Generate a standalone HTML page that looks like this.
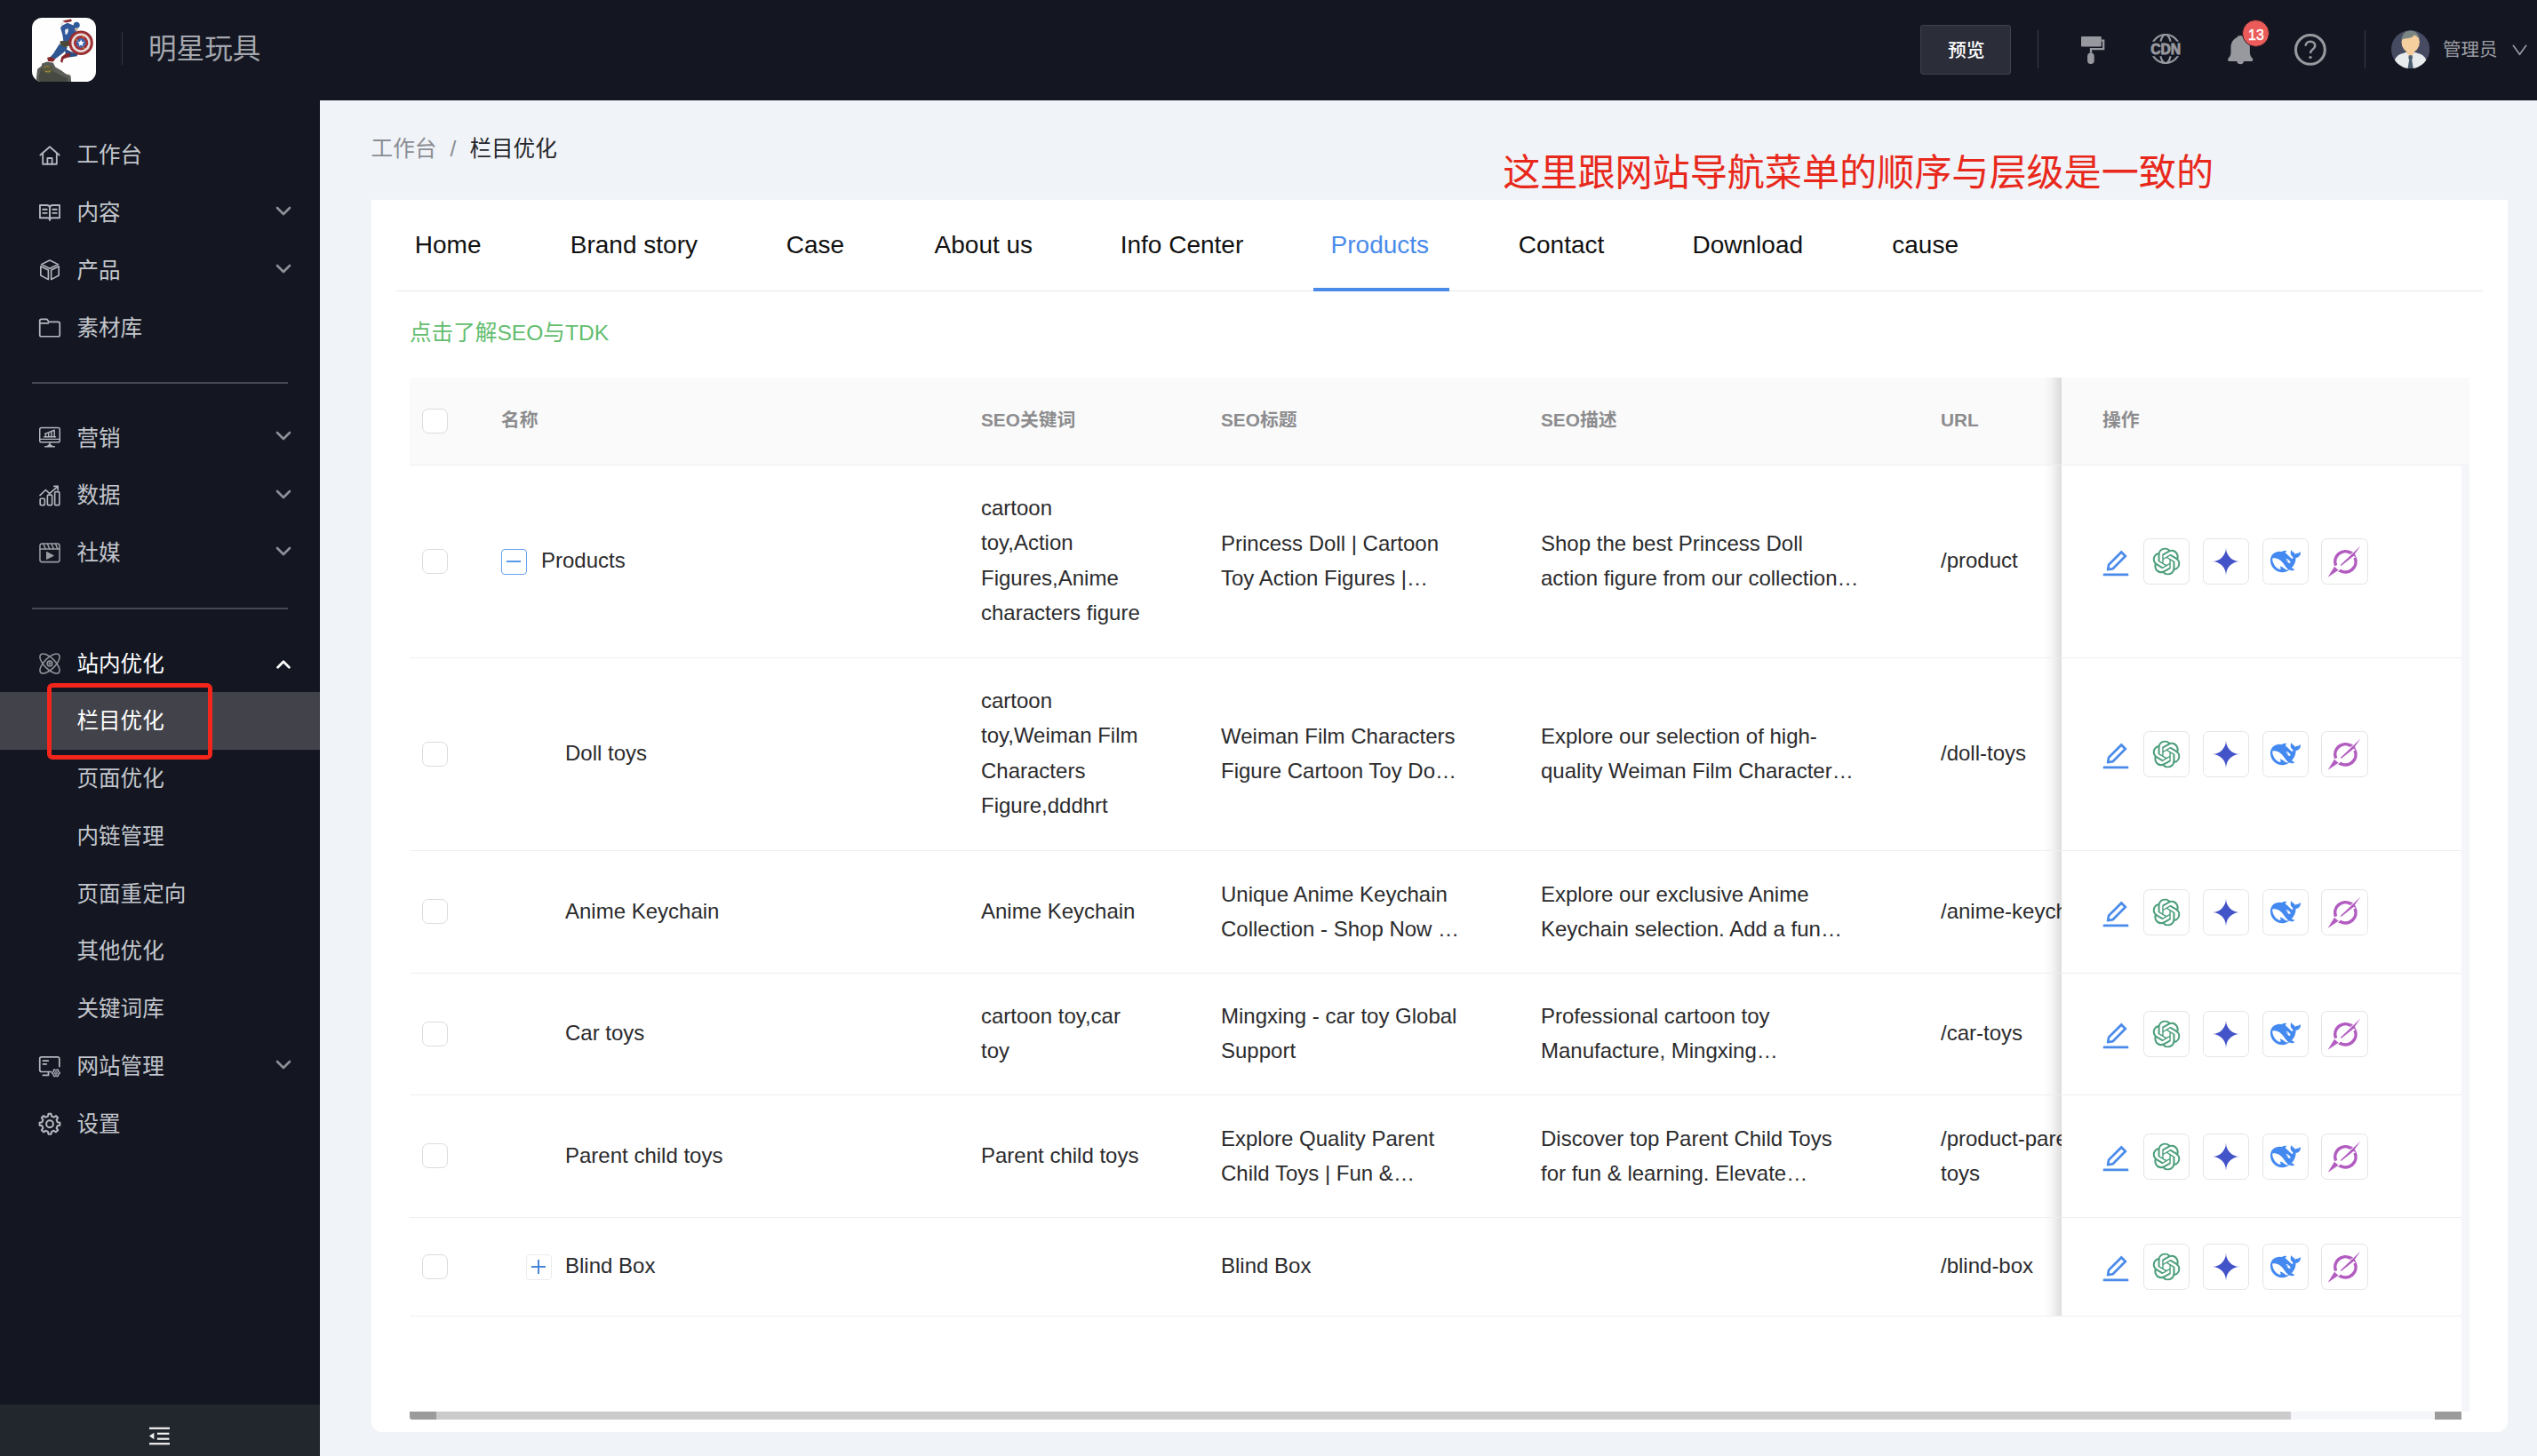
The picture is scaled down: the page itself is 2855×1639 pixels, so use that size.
<!DOCTYPE html>
<html lang="zh-CN"><head><meta charset="utf-8"><title>栏目优化</title>
<style>
html,body{margin:0;padding:0}
body{width:2855px;height:1639px;overflow:hidden;background:#f0f3f7;position:relative;font-family:"Liberation Sans","Noto Sans CJK SC",sans-serif;color:#2b2d30}
*{box-sizing:border-box}
.abs{position:absolute}
#hdr{position:absolute;left:0;top:0;width:2855px;height:113px;background:#141722}
#side{position:absolute;left:0;top:113px;width:360px;height:1526px;background:#141722}
#logo{position:absolute;left:36px;top:20px;width:72px;height:72px}
.vdiv{position:absolute;width:1px;background:#33363f}
#title{position:absolute;left:167px;top:30px;height:50px;line-height:50px;font-size:31.600px;color:#a4a7ae;letter-spacing:0}
#preview{position:absolute;left:2161px;top:28px;width:102px;height:56px;border:1px solid #3f424c;background:#2b2d38;border-radius:3px;color:#fff;font-weight:500;font-size:20.800px;line-height:55.800px;text-align:center;padding-left:1.500px}
.hi{position:absolute}
#badge{position:absolute;left:2523.400px;top:22.200px;width:31px;height:31px;border-radius:50%;background:#ea5b59;border:1px solid #2a1a22;color:#fff;font-weight:normal;-webkit-text-stroke:.450px #fff;font-size:15.800px;line-height:34.400px;text-align:center;letter-spacing:0;overflow:hidden}
#uname{position:absolute;left:2749px;top:36px;height:40px;line-height:40px;font-size:20.500px;color:#9b9da4}
/* sidebar */
.actbg{position:absolute;left:0;top:778.600px;width:360px;height:65.200px;background:#42434a}
.ico{position:absolute;left:42.500px;width:26px;height:26px}
.ico svg{display:block}
.mt{position:absolute;left:86.500px;height:66.200px;line-height:66.200px;font-size:24.550px;color:#c3c6cc;white-space:nowrap}
.chev{position:absolute;left:309.500px;width:18px;height:12px}
.chev svg{display:block}
.sdiv{position:absolute;left:36px;width:288px;height:2px;background:#464953}
#redbox{position:absolute;left:53.200px;top:768.600px;width:186px;height:86.500px;border:5.800px solid #f4261b;border-radius:6px}
#fold{position:absolute;left:0;top:1580.700px;width:360px;height:59px;background:#22272d}
/* main */
#bc{position:absolute;left:417.600px;top:148px;height:40px;line-height:40px;font-size:24.600px;white-space:nowrap;color:#8a8d93}
#bc b{font-weight:normal;color:#26282c}
#bc i{font-style:normal;display:inline-block;width:37px;text-align:center}
#note{position:absolute;left:1691.200px;top:162.300px;height:66px;line-height:66px;font-size:42.100px;color:#e8281b;white-space:nowrap}
#card{position:absolute;left:418px;top:225px;width:2404px;height:1387px;background:#fff;border-radius:0 0 12px 12px}
#tabline{position:absolute;left:28px;top:102px;width:2348px;height:1px;background:#e4e7ed}
.tab{position:absolute;top:29.400px;height:44px;line-height:44px;font-size:28px;color:#111;white-space:nowrap}
.tab.on{color:#4a8bea}
#tabbar{position:absolute;left:1060px;top:99px;width:153px;height:4px;background:#4a8bea}
#tip{position:absolute;left:43px;top:130px;height:40px;line-height:40px;font-size:24.600px;color:#63bd6e;white-space:nowrap}
/* table */
#tbl{position:absolute;left:43px;top:200px;width:2318px;height:1164px}
#th{position:absolute;left:0;top:0;width:2318px;height:99px;background:#fafafa;border-bottom:1px solid #efefef;border-radius:3px 3px 0 0}
#th span.h{position:absolute;top:0;height:98px;line-height:96.500px;font-size:20.800px;font-weight:bold;color:#8c8c8e;white-space:nowrap}
.cb{position:absolute;left:14px;top:50%;width:29px;height:28px;margin-top:-14.200px;border:1.500px solid #dcdcdc;border-radius:7px;background:#fff}
.tr{position:absolute;left:0;width:2309px;border-bottom:1px solid #efefef;overflow:hidden}
.tr .c{position:absolute;top:50%;transform:translateY(calc(-50% - 1.1px));font-size:24px;line-height:39.375px;white-space:nowrap;color:#2b2b2d}
.exp{position:absolute;top:50%;width:29px;height:29px;margin-top:-14.500px;border-radius:4px;background:#fff}
.exp.minus{left:103px;border:1.500px solid #6aa3ec}
.exp.minus i{position:absolute;left:5px;top:12px;width:16px;height:2px;background:#5a9be9}
.exp.plus{left:130.500px;border:1px solid #ececec}
.exp.plus i{position:absolute;left:5.500px;top:12.800px;width:16px;height:1.600px;background:#4a86d8}
.exp.plus b{position:absolute;left:12.700px;top:5.500px;width:1.600px;height:16px;background:#4a86d8}
.fx{position:absolute;left:1859px;top:0;width:450px;height:100%;background:#fff}
.fx:before{content:"";position:absolute;left:-20px;top:0;width:20px;height:100%;background:linear-gradient(to right,rgba(0,0,0,0),rgba(0,0,0,.03) 40%,rgba(0,0,0,.13))}
.ops{position:absolute;left:45px;top:50%;height:52px;margin-top:-26px;width:320px}
.ops .edit{position:absolute;left:.200px;top:12.300px}
.ab{position:absolute;top:0;width:52px;height:52px;border:1px solid #e3e4e8;border-radius:6.500px;background:#fff}
.ab svg{position:absolute;left:50%;top:50%;transform:translate(-50%,-50%)}
.ab:nth-of-type(1){left:46.800px}
.ab:nth-of-type(2){left:113.500px}
.ab:nth-of-type(3){left:181.200px}
.ab:nth-of-type(4){left:247.300px;width:52.600px}
#gut{position:absolute;left:2309px;top:99px;width:9px;height:1065px;background:#f5f6fa}
#hs{position:absolute;left:0;top:1164px;width:2309px;height:9px;background:#f5f6fa}
#hs i{position:absolute;top:0;height:9px}
</style></head><body>

<div id="hdr">
  <svg id="logo" viewBox="0 0 72 72">
    <defs><clipPath id="lc"><rect width="72" height="72" rx="11.500"/></clipPath><filter id="lb" x="-5%" y="-5%" width="110%" height="110%"><feGaussianBlur stdDeviation=".45"/></filter></defs>
    <g clip-path="url(#lc)">
      <rect width="72" height="72" fill="#fefefe"/>
      <g filter="url(#lb)">
      <path d="M4.900 68.100 6.100 57.700 10.700 54.200 11.300 51.400 17 49.600 23.900 50.800 26.300 55.400 33.200 59.400 37.800 62.900 43.600 65.200 44.100 72H4.900z" fill="#5a5d58"/>
      <path d="M8 66l2-8 5-3 6 1 4 5 8 4 7 3v4H8z" fill="#444842"/>
      <path d="M12 57.500c1.500-3 5-4.500 8-3.500s4.500 4 3 6.500-5 3.500-8 2-4-3-3-5z" fill="#55583d"/>
      <path d="M13.500 56.500l3-2 3 .5M15 60l3 1 3-1.500M41 63.500l1.500.5" stroke="#b3923c" stroke-width="1" fill="none"/>
      <path d="M30.900 29.400 40.100 33.500 35.500 39.200 26.300 46.200 19.900 45 23.900 40.400z" fill="#2f5690"/>
      <path d="M17 45 20.500 43.900 26.300 46.200 23.900 49.600 18.200 49z" fill="#84282c"/>
      <path d="M36.600 34.600 43.600 38.100 51.600 41 50.500 43.300 41.800 44.400 37.800 40.400z" fill="#2b4d84"/>
      <path d="M37.800 40.400 43.600 39.800 42.400 43.900 35.500 46.200 34.300 50.800 32 49.600 33.200 43.900z" fill="#86282c"/>
      <path d="M31.400 26.500 41.800 24.800 42.400 31.200 36.600 33.500 32 30z" fill="#4b4a34"/>
      <path d="M33.800 8.700 40.100 5.800 48.200 9.200 51.100 13.800 46 20 42.800 25 35.500 26.800 34.300 19 32 11.500z" fill="#30599a"/>
      <path d="M37 13.500l3.500-1.500 .5 3-1.500 3.500-2 .5z" fill="#e8edf4"/>
      <path d="M30.900 7.500 34.300 4.600 36.600 5.800 33.200 9.200z" fill="#e9e6e3"/>
      <path d="M34.300 3.500 43.600 1.400 45 2.900 44.100 4.300 37.800 5.500z" fill="#8c2a2e"/>
      <circle cx="50.200" cy="8.300" r="3.500" fill="#2f5a9a"/>
      <path d="M48 11.500l4 .5-1 3-2.500-.5z" fill="#d9b79b"/>
      </g>
      <g filter="url(#lb)">
      <circle cx="55.100" cy="28.300" r="13.700" fill="#8d2b2d"/>
      <circle cx="55.100" cy="28.300" r="12.600" fill="#a63336"/>
      <circle cx="55.100" cy="28.300" r="10.700" fill="#e6e3e3"/>
      <circle cx="55.100" cy="28.300" r="8.200" fill="#a53034"/>
      <circle cx="55.100" cy="28.300" r="5.400" fill="#4368b0"/>
      <path d="M55.100 24.600l1.100 2.400 2.600.3-1.900 1.800.5 2.600-2.300-1.300-2.300 1.300.5-2.600-1.900-1.800 2.600-.3z" fill="#fff"/>
      <path d="M48.500 23.500l3 2.500M56.500 19.500l1.500 3M57.500 33.500l2.500 1.500" stroke="#d9a33a" stroke-width="1" fill="none"/>
      </g>
    </g>
  </svg>
  <div class="vdiv" style="left:137px;top:36px;height:37px"></div>
  <div id="title">明星玩具</div>
  <div id="preview">预览</div>
  <div class="vdiv" style="left:2293px;top:34px;height:43px;background:#3a3d47"></div>
  <!-- paint roller -->
  <svg class="hi" style="left:2341.900px;top:40.900px" width="28" height="32" viewBox="0 0 28 32" fill="#97999f">
    <rect x="0" y="0" width="22.800" height="11.400" rx="1"/>
    <path d="M22.800 4.600h2.400v9.600H11v4.600" fill="none" stroke="#97999f" stroke-width="2.300"/>
    <rect x="7.100" y="18.600" width="7.600" height="12.300" rx="3.700"/>
  </svg>
  <!-- cdn -->
  <svg class="hi" style="left:2418px;top:36px" width="38" height="38" viewBox="0 0 38 38" fill="none">
    <defs><clipPath id="cg"><path d="M0 0h38v10.800H0zM0 27.200h38V38H0z"/></clipPath></defs>
    <g clip-path="url(#cg)" stroke="#97999f" stroke-width="2.200">
      <circle cx="19" cy="19" r="16"/>
      <ellipse cx="19" cy="19" rx="6.600" ry="16"/>
    </g>
    <text x="19.200" y="25" text-anchor="middle" font-family="Liberation Sans, sans-serif" font-weight="bold" font-size="16.800" fill="#97999f" stroke="#97999f" stroke-width=".900" textLength="34" lengthAdjust="spacingAndGlyphs">CDN</text>
  </svg>
  <!-- bell -->
  <svg class="hi" style="left:2506.800px;top:39.900px;overflow:visible" width="28.400" height="32.300" viewBox="0 0 28.400 32.300" fill="#97999f"><path d="M14.200 0C12.400 0 10.900.800 10.200 2.200 6 4 3.600 8 3.500 13v6.200c0 3.300-1.700 5.200-3.100 6.700-.900 1.100-.200 3.100 1.400 3.100h8.400c.400 2 2 3.300 4 3.300s3.600-1.300 4-3.300h8.400c1.600 0 2.300-2 1.400-3.100-1.400-1.500-3.100-3.400-3.100-6.700V13c-.100-5-2.500-9-6.700-10.800C17.500.800 16 0 14.200 0z"/></svg>
  <div id="badge">13</div>
  <!-- help -->
  <svg class="hi" style="left:2581px;top:37px" width="38" height="38" viewBox="0 0 38 38" fill="none">
    <circle cx="18.900" cy="18.900" r="16.400" stroke="#97999f" stroke-width="3.100"/>
    <path d="M13.600 14.800c0-3 2.300-5 5.300-5s5.300 1.900 5.300 4.600c0 2.200-1.300 3.300-2.800 4.400-1.500 1.100-2.400 2-2.400 4.300" stroke="#97999f" stroke-width="2.600"/>
    <circle cx="19" cy="27.600" r="1.700" fill="#97999f"/>
  </svg>
  <div class="vdiv" style="left:2661px;top:34px;height:43px;background:#3a3d47"></div>
  <!-- avatar -->
  <svg class="hi" style="left:2690.800px;top:34.100px" width="43.200" height="43.200" viewBox="0 0 43.200 43.200">
    <defs><clipPath id="av"><circle cx="21.600" cy="21.600" r="21.600"/></clipPath></defs>
    <g clip-path="url(#av)">
      <rect width="43.200" height="43.200" fill="#474b61"/>
      <path d="M3.500 36c.5-5 4-8.500 9-9.800l5-1.600h8.300l5 1.600c5 1.300 8.500 4.800 9 9.800v8H3.500z" fill="#e8ecec"/>
      <path d="M17.300 20h8.700v6l-4.300 3.400-4.400-3.400z" fill="#f4cd9b"/>
      <path d="M19.800 28.300h3.800l.5 3.200-.9 1.500 1.700 10.500h-6.400l1.700-10.500-.9-1.500z" fill="#4d5f70"/>
      <ellipse cx="21.700" cy="13.600" rx="10.200" ry="11.400" fill="#f5cf9d"/>
      <path d="M11.400 11.500C12 4.500 16 .6 21.800.6c5.800 0 9.500 3.800 10.100 10.300-1.500-3-4-4.800-6.300-5.300-1 2-3.300 3.300-6.400 3.300-3.200 0-6 .6-7.800 2.600z" fill="#7a8584"/>
    </g>
  </svg>
  <div id="uname">管理员</div>
  <svg class="hi" style="left:2826.500px;top:49.500px" width="17" height="13" viewBox="0 0 17 13" fill="none" stroke="#9b9da4" stroke-width="1.600" stroke-linecap="round" stroke-linejoin="round"><path d="M1.300 1.300l7.200 10 7.200-10"/></svg>
</div>

<div id="side">
<div style="position:absolute;left:0;top:-113px;width:360px;height:1639px">
<div class="actbg"></div>
<span class="ico" style="top:161.50px"><svg width="26" height="26" viewBox="0 0 24 24" fill="none" stroke="#b4b7be" stroke-width="1.7" stroke-linecap="round" stroke-linejoin="round" ><path d="M2.2 11.6 12 3l9.8 8.600"/><path d="M4.800 9.800V21h14.400V9.800"/><path d="M9.600 21v-6.200h4.800V21"/></svg></span><span class="mt" style="top:141.70px">工作台</span>
<span class="ico" style="top:226.20px"><svg width="26" height="26" viewBox="0 0 24 24" fill="none" stroke="#b4b7be" stroke-width="1.7" stroke-linecap="round" stroke-linejoin="round" ><path d="M1.800 4.600h7.200c1.700 0 3 1.200 3 2.800V20c0-1.300-1.100-2.200-2.500-2.200H1.800z"/><path d="M22.200 4.600H15c-1.700 0-3 1.200-3 2.800V20c0-1.300 1.100-2.200 2.500-2.200h7.700z"/><path d="M4.800 9h4.200M4.800 12.800h4.200M15 9h4.200M15 12.800h4.200"/></svg></span><span class="mt" style="top:206.80px">内容</span><span class="chev" style="top:232.20px"><svg width="18" height="12" viewBox="0 0 18 12" fill="none" stroke="#8d9097" stroke-width="2.600" stroke-linecap="round" stroke-linejoin="round"><path d="M2 2l7 7 7-7"/></svg></span>
<span class="ico" style="top:290.90px"><svg width="26" height="26" viewBox="0 0 24 24" fill="none" stroke="#b4b7be" stroke-width="1.5" stroke-linecap="round" stroke-linejoin="round" ><path d="M12 1.800l8.700 4.300L12 10.400 3.300 6.100z"/><path d="M2.600 8.100l7.900 3.900v9.800l-7.900-4.200z"/><path d="M21.400 8.100l-7.900 3.900v9.800l7.900-4.200z"/></svg></span><span class="mt" style="top:271.70px">产品</span><span class="chev" style="top:296.90px"><svg width="18" height="12" viewBox="0 0 18 12" fill="none" stroke="#8d9097" stroke-width="2.600" stroke-linecap="round" stroke-linejoin="round"><path d="M2 2l7 7 7-7"/></svg></span>
<span class="ico" style="top:355.60px"><svg width="26" height="26" viewBox="0 0 24 24" fill="none" stroke="#b4b7be" stroke-width="1.6" stroke-linecap="round" stroke-linejoin="round" ><path d="M1.600 4.800c0-.9.700-1.600 1.600-1.600h6l1.700 2.600h9.900c.9 0 1.600.7 1.600 1.600v12c0 .9-.7 1.600-1.600 1.600H3.200c-.9 0-1.600-.7-1.600-1.600z"/><path d="M1.600 7.300h8.800"/></svg></span><span class="mt" style="top:336.50px">素材库</span>
<span class="ico" style="top:479.10px"><svg width="26" height="26" viewBox="0 0 24 24" fill="none" stroke="#b4b7be" stroke-width="1.35" stroke-linecap="round" stroke-linejoin="round" ><rect x="1.600" y="2.400" width="20.800" height="15" rx="1.800"/><path d="M1.600 14.200h20.800"/><path d="M12 17.400v2.200M7 22h10M9 22l3-2.400 3 2.400"/><path d="M6 11.800h12"/><path d="M7.800 11.600V10M10.800 11.600V8.600M13.800 11.600V7.200M16.800 11.600V5.600"/><path d="M7 8.800l9.800-4"/></svg></span><span class="mt" style="top:460.60px">营销</span><span class="chev" style="top:485.10px"><svg width="18" height="12" viewBox="0 0 18 12" fill="none" stroke="#8d9097" stroke-width="2.600" stroke-linecap="round" stroke-linejoin="round"><path d="M2 2l7 7 7-7"/></svg></span>
<span class="ico" style="top:544.70px"><svg width="26" height="26" viewBox="0 0 24 24" fill="none" stroke="#b4b7be" stroke-width="1.5" stroke-linecap="round" stroke-linejoin="round" ><rect x="2" y="15" width="4.800" height="6.800" rx="1"/><rect x="9.600" y="11.200" width="4.800" height="10.600" rx="1"/><rect x="17.200" y="8" width="4.800" height="13.800" rx="1"/><path d="M1.800 11.600l6-5.600 4 3.800 8.400-7.400"/><path d="M16.400 2.200h4v4"/></svg></span><span class="mt" style="top:524.80px">数据</span><span class="chev" style="top:550.70px"><svg width="18" height="12" viewBox="0 0 18 12" fill="none" stroke="#8d9097" stroke-width="2.600" stroke-linecap="round" stroke-linejoin="round"><path d="M2 2l7 7 7-7"/></svg></span>
<span class="ico" style="top:609.40px"><svg width="26" height="26" viewBox="0 0 24 24" fill="none" stroke="#9a9da3" stroke-width="1.4" stroke-linecap="round" stroke-linejoin="round" ><rect x="1.800" y="2.800" width="20.400" height="19" rx="2.200"/><path d="M1.800 8.400h20.400"/><path d="M5.400 3l2.200 5.200M9.600 3l2.200 5.200M13.800 3l2.200 5.200M18 3l2.200 5.200"/><path d="M8.800 11.600v7.200l7-3.600z" fill="#9a9da3" stroke-width="1"/></svg></span><span class="mt" style="top:589.70px">社媒</span><span class="chev" style="top:615.40px"><svg width="18" height="12" viewBox="0 0 18 12" fill="none" stroke="#8d9097" stroke-width="2.600" stroke-linecap="round" stroke-linejoin="round"><path d="M2 2l7 7 7-7"/></svg></span>
<span class="ico" style="top:733.90px"><svg width="26" height="26" viewBox="0 0 24 24" fill="none" stroke="#8e9096" stroke-width="1.3" stroke-linecap="round" stroke-linejoin="round" style="overflow:visible"><g transform="translate(12 12) scale(1.14) translate(-12 -12)"><ellipse cx="12" cy="12" rx="11.600" ry="5" transform="rotate(45 12 12)"/><ellipse cx="12" cy="12" rx="11.600" ry="5" transform="rotate(-45 12 12)"/><circle cx="12" cy="12" r="2.300"/><circle cx="12" cy="12" r=".5" fill="#8e9096"/></g></svg></span><span class="mt" style="top:714.80px;color:#fff">站内优化</span><span class="chev" style="top:739.90px"><svg width="18" height="12" viewBox="0 0 18 12" fill="none" stroke="#ffffff" stroke-width="2.700" stroke-linecap="round" stroke-linejoin="round" style="margin-top:1.4px"><path d="M2.600 10.200l6.400-6.400 6.400 6.400"/></svg></span>
<span class="mt" style="top:778.80px;color:#fff">栏目优化</span>
<span class="mt" style="top:843.50px">页面优化</span>
<span class="mt" style="top:908.50px">内链管理</span>
<span class="mt" style="top:973.80px">页面重定向</span>
<span class="mt" style="top:1038.40px">其他优化</span>
<span class="mt" style="top:1102.80px">关键词库</span>
<span class="ico" style="top:1186.80px"><svg width="26" height="26" viewBox="0 0 24 24" fill="none" stroke="#b4b7be" stroke-width="1.6" stroke-linecap="round" stroke-linejoin="round" ><path d="M22 12.500V4.400c0-1-.8-1.800-1.800-1.800H3.400c-1 0-1.800.8-1.800 1.800v11.800c0 1 .8 1.800 1.800 1.800h9.800"/><path d="M5 6.600h5.400M5 10h3.600"/><path d="M10.600 18.200v3.400H5"/><path d="M21.25 18.27 L22.24 18.51 L22.24 19.89 L21.25 20.13 L20.63 21.21 L20.92 22.18 L19.72 22.87 L19.02 22.13 L17.78 22.13 L17.08 22.87 L15.88 22.18 L16.17 21.21 L15.55 20.13 L14.56 19.89 L14.56 18.51 L15.55 18.27 L16.17 17.19 L15.88 16.22 L17.08 15.53 L17.78 16.27 L19.02 16.27 L19.72 15.53 L20.92 16.22 L20.63 17.19Z" stroke-width="1.200"/><circle cx="18.400" cy="19.200" r="1.200" stroke-width="1.100"/></svg></span><span class="mt" style="top:1167.80px">网站管理</span><span class="chev" style="top:1192.80px"><svg width="18" height="12" viewBox="0 0 18 12" fill="none" stroke="#8d9097" stroke-width="2.600" stroke-linecap="round" stroke-linejoin="round"><path d="M2 2l7 7 7-7"/></svg></span>
<span class="ico" style="top:1252.10px"><svg width="26" height="26" viewBox="0 0 24 24" fill="none" stroke="#b4b7be" stroke-width="1.9" stroke-linecap="round" stroke-linejoin="round" ><path d="M19.97 10.29 L22.51 10.79 L22.51 13.61 L19.97 14.11 L18.99 16.48 L20.43 18.63 L18.43 20.63 L16.28 19.19 L13.91 20.17 L13.41 22.71 L10.59 22.71 L10.09 20.17 L7.72 19.19 L5.57 20.63 L3.57 18.63 L5.01 16.48 L4.03 14.11 L1.49 13.61 L1.49 10.79 L4.03 10.29 L5.01 7.92 L3.57 5.77 L5.57 3.77 L7.72 5.21 L10.09 4.23 L10.59 1.69 L13.41 1.69 L13.91 4.23 L16.28 5.21 L18.43 3.77 L20.43 5.77 L18.99 7.92Z"/><circle cx="12" cy="12.200" r="3.600"/></svg></span><span class="mt" style="top:1232.70px">设置</span>
<div class="sdiv" style="top:429.500px"></div>
<div class="sdiv" style="top:684.200px"></div>
<div id="redbox"></div>
<div id="fold">
  <svg style="position:absolute;left:168px;top:25px" width="24" height="21" viewBox="0 0 24 21" fill="#f2f2f2"><rect x="0" y=".700" width="23" height="2.200"/><rect x="8.900" y="6.700" width="13.500" height="2.200"/><rect x="8.900" y="12.600" width="13.500" height="2.200"/><rect x="0" y="18.100" width="23" height="2.200"/><path d="M5.400 6.800v7.400L0 10.500z"/></svg>
</div>
</div>
</div>

<div id="bc">工作台<i>/</i><b>栏目优化</b></div>
<div id="note">这里跟网站导航菜单的顺序与层级是一致的</div>

<div id="card">
  <span class="tab" style="left:48.8px">Home</span><span class="tab" style="left:223.8px">Brand story</span><span class="tab" style="left:466.8px">Case</span><span class="tab" style="left:633.6px">About us</span><span class="tab" style="left:842.7px">Info Center</span><span class="tab on" style="left:1079.6px">Products</span><span class="tab" style="left:1290.8px">Contact</span><span class="tab" style="left:1486.5px">Download</span><span class="tab" style="left:1711.3px">cause</span>
  <div id="tabline"></div>
  <div id="tabbar"></div>
  <div id="tip">点击了解SEO与TDK</div>
  <div id="tbl">
    <div id="th">
      <span class="cb"></span>
      <span class="h" style="left:103px">名称</span>
      <span class="h" style="left:643px">SEO关键词</span>
      <span class="h" style="left:913px">SEO标题</span>
      <span class="h" style="left:1273px">SEO描述</span>
      <span class="h" style="left:1723px">URL</span>
      <div class="fx" style="background:#fafafa;height:98px;width:459px;border-radius:0 3px 0 0"><span class="h" style="left:46px">操作</span></div>
    </div>
    <div class="tr" style="top:99.00px;height:217.00px"><span class="cb"></span><span class="exp minus"><i></i></span><span class="c name" style="left:148px">Products</span><span class="c" style="left:643px">cartoon<br>toy,Action<br>Figures,Anime<br>characters figure</span><span class="c" style="left:913px">Princess Doll | Cartoon<br>Toy Action Figures |…</span><span class="c" style="left:1273px">Shop the best Princess Doll<br>action figure from our collection…</span><span class="c" style="left:1723px">/product</span><div class="fx"><div class="ops"><svg class="edit" width="32" height="32" viewBox="64 64 896 896" fill="#4a8bea"><path d="M257.7 752c2 0 4-.2 6-.5L431.900 722c2-.4 3.900-1.300 5.300-2.800l423.900-423.900a9.960 9.960 0 000-14.100L694.900 114.900c-1.900-1.900-4.400-2.900-7.100-2.900s-5.200 1-7.100 2.900L256.800 538.800c-1.500 1.500-2.400 3.300-2.800 5.300l-29.500 168.200a33.500 33.500 0 009.400 29.800c6.600 6.400 14.900 9.900 23.800 9.900zm67.400-174.400L687.800 215l73.300 73.300-362.700 362.600-88.900 15.700 15.600-89zM880 836H144c-17.700 0-32 14.300-32 32v36c0 4.400 3.600 8 8 8h784c4.400 0 8-3.600 8-8v-36c0-17.700-14.300-32-32-32z"/></svg><span class="ab"><svg width="31" height="31" viewBox="0 0 24 24" fill="#4c9e7b"><path d="M22.2819 9.8211a5.9847 5.9847 0 0 0-.5157-4.9108 6.0462 6.0462 0 0 0-6.5098-2.9A6.0651 6.0651 0 0 0 4.9807 4.1818a5.9847 5.9847 0 0 0-3.9977 2.9 6.0462 6.0462 0 0 0 .7427 7.0966 5.98 5.98 0 0 0 .511 4.9107 6.051 6.051 0 0 0 6.5146 2.9001A5.9847 5.9847 0 0 0 13.2599 24a6.0557 6.0557 0 0 0 5.7718-4.2058 5.9894 5.9894 0 0 0 3.9977-2.9001 6.0557 6.0557 0 0 0-.7475-7.0729zm-9.022 12.6081a4.4755 4.4755 0 0 1-2.8764-1.0408l.1419-.0804 4.7783-2.7582a.7948.7948 0 0 0 .3927-.6813v-6.7369l2.02 1.1686a.071.071 0 0 1 .038.052v5.5826a4.504 4.504 0 0 1-4.4945 4.4944zm-9.6607-4.1254a4.4708 4.4708 0 0 1-.5346-3.0137l.142.0852 4.783 2.7582a.7712.7712 0 0 0 .7806 0l5.8428-3.3685v2.3324a.0804.0804 0 0 1-.0332.0615L9.74 19.9502a4.4992 4.4992 0 0 1-6.1408-1.6464zM2.3408 7.8956a4.485 4.485 0 0 1 2.3655-1.9728V11.6a.7664.7664 0 0 0 .3879.6765l5.8144 3.3543-2.0201 1.1685a.0757.0757 0 0 1-.071 0l-4.8303-2.7865A4.504 4.504 0 0 1 2.3408 7.872zm16.5963 3.8558L13.1038 8.364 15.1192 7.2a.0757.0757 0 0 1 .071 0l4.8303 2.7913a4.4944 4.4944 0 0 1-.6765 8.1042v-5.6772a.79.79 0 0 0-.407-.667zm2.0107-3.0231l-.142-.0852-4.7735-2.7818a.7759.7759 0 0 0-.7854 0L9.409 9.2297V6.8974a.0662.0662 0 0 1 .0284-.0615l4.8303-2.7866a4.4992 4.4992 0 0 1 6.6802 4.66zM8.3065 12.863l-2.02-1.1638a.0804.0804 0 0 1-.038-.0567V6.0742a4.4992 4.4992 0 0 1 7.3757-3.4537l-.142.0805L8.704 5.459a.7948.7948 0 0 0-.3927.6813zm1.0976-2.3654l2.602-1.4998 2.6069 1.4998v2.9994l-2.5974 1.4997-2.6067-1.4997Z"/></svg></span><span class="ab"><svg width="31" height="31" viewBox="0 0 24 24" fill="#4353c8"><path d="M11.04 19.32Q12 21.51 12 24q0-2.490.93-4.680.96-2.190 2.580-3.810t3.810-2.550Q21.510 12 24 12q-2.490 0-4.680-.93a12.300 12.300 0 0 1-3.810-2.580 12.300 12.300 0 0 1-2.580-3.810Q12 2.490 12 0q0 2.490-.96 4.680-.93 2.190-2.550 3.810a12.300 12.300 0 0 1-3.810 2.580Q2.490 12 0 12q2.490 0 4.680.96 2.190.93 3.810 2.550t2.550 3.810"/></svg></span><span class="ab"><svg width="34" height="34" viewBox="0 0 24 24" fill="#4389f0" fill-rule="evenodd"><path d="M23.748 4.482c-.254-.124-.364.113-.512.234-.051.039-.094.090-.137.136-.372.397-.806.657-1.373.626-.829-.046-1.537.214-2.163.848-.133-.782-.575-1.248-1.247-1.548-.352-.156-.708-.311-.955-.650-.172-.241-.219-.510-.305-.774-.055-.160-.110-.323-.293-.350-.200-.031-.278.136-.356.276-.313.572-.434 1.202-.422 1.840.027 1.436.633 2.580 1.838 3.393.137.093.172.187.129.323-.082.280-.180.552-.266.833-.055.179-.137.217-.329.140a5.526 5.526 0 01-1.736-1.180c-.857-.828-1.631-1.742-2.597-2.458a11.365 11.365 0 00-.689-.471c-.985-.957.130-1.743.388-1.836.270-.098.093-.432-.779-.428-.872.004-1.670.295-2.687.684a3.055 3.055 0 01-.465.137 9.597 9.597 0 00-2.883-.102c-1.885.210-3.390 1.102-4.497 2.623C.082 8.606-.231 10.684.152 12.850c.403 2.284 1.569 4.175 3.360 5.653 1.858 1.533 3.997 2.284 6.438 2.140 1.482-.085 3.133-.284 4.994-1.860.470.234.962.327 1.780.397.630.059 1.236-.030 1.705-.128.735-.156.684-.837.419-.961-2.155-1.004-1.682-.595-2.113-.926 1.096-1.296 2.746-2.642 3.392-7.003.050-.347.007-.565 0-.845-.004-.170.035-.237.230-.256a4.173 4.173 0 001.545-.475c1.396-.763 1.960-2.015 2.093-3.517.020-.230-.004-.467-.247-.588zM11.581 18c-2.089-1.642-3.102-2.183-3.520-2.160-.392.024-.321.471-.235.763.090.288.207.486.371.739.114.167.192.416-.113.603-.673.416-1.842-.140-1.897-.167-1.361-.802-2.500-1.860-3.301-3.307-.774-1.393-1.224-2.887-1.298-4.482-.020-.386.093-.522.477-.592a4.696 4.696 0 011.529-.039c2.132.312 3.946 1.265 5.468 2.774.868.860 1.525 1.887 2.202 2.891.720 1.066 1.494 2.082 2.480 2.914.348.292.625.514.891.677-.802.090-2.140.110-3.054-.614zm1-6.440a.306.306 0 01.415-.287.302.302 0 01.200.288.306.306 0 01-.310.307.303.303 0 01-.304-.308zm3.110 1.596c-.200.081-.399.151-.590.160a1.245 1.245 0 01-.798-.254c-.274-.230-.470-.358-.552-.758a1.730 1.730 0 01.016-.588c.070-.327-.008-.537-.239-.727-.187-.156-.426-.199-.688-.199a.559.559 0 01-.254-.078c-.110-.054-.200-.190-.114-.358.028-.054.160-.186.192-.210.356-.202.767-.136 1.146.016.352.144.618.408 1.001.782.391.451.462.576.685.914.176.265.336.537.445.848.067.195-.019.354-.250.452z"/></svg></span><span class="ab"><svg width="52" height="52" viewBox="0 0 52 52" fill="none"><path d="M32.400 16.400A11.600 11.600 0 0 0 15.600 30.600" stroke="#b25cc0" stroke-width="3.600"/><path d="M37.100 21.800A11.600 11.600 0 0 1 20.300 36.200" stroke="#b25cc0" stroke-width="3.600"/><path d="M43.400 8.600 37 17.400 39 22.400 35.800 19.800 21.600 31 20.800 30z" fill="#b25cc0"/><path d="M6.600 43.800 14 31.800 18.600 35.800z" fill="#b25cc0"/><path d="M32.600 14.400l2.400.8-2.900 3.300zM20.400 38.200l-2.400-.8 3.100-3z" fill="#b25cc0"/></svg></span></div></div></div>
<div class="tr" style="top:316.00px;height:217.00px"><span class="cb"></span><span class="c name" style="left:175px">Doll toys</span><span class="c" style="left:643px">cartoon<br>toy,Weiman Film<br>Characters<br>Figure,dddhrt</span><span class="c" style="left:913px">Weiman Film Characters<br>Figure Cartoon Toy Do…</span><span class="c" style="left:1273px">Explore our selection of high-<br>quality Weiman Film Character…</span><span class="c" style="left:1723px">/doll-toys</span><div class="fx"><div class="ops"><svg class="edit" width="32" height="32" viewBox="64 64 896 896" fill="#4a8bea"><path d="M257.7 752c2 0 4-.2 6-.5L431.900 722c2-.4 3.900-1.300 5.300-2.800l423.900-423.900a9.960 9.960 0 000-14.100L694.900 114.900c-1.900-1.900-4.400-2.900-7.100-2.900s-5.200 1-7.100 2.900L256.800 538.800c-1.500 1.500-2.400 3.300-2.800 5.300l-29.500 168.200a33.500 33.500 0 009.400 29.800c6.600 6.400 14.900 9.900 23.800 9.900zm67.400-174.400L687.800 215l73.300 73.300-362.700 362.600-88.900 15.700 15.600-89zM880 836H144c-17.700 0-32 14.300-32 32v36c0 4.400 3.600 8 8 8h784c4.400 0 8-3.600 8-8v-36c0-17.700-14.300-32-32-32z"/></svg><span class="ab"><svg width="31" height="31" viewBox="0 0 24 24" fill="#4c9e7b"><path d="M22.2819 9.8211a5.9847 5.9847 0 0 0-.5157-4.9108 6.0462 6.0462 0 0 0-6.5098-2.9A6.0651 6.0651 0 0 0 4.9807 4.1818a5.9847 5.9847 0 0 0-3.9977 2.9 6.0462 6.0462 0 0 0 .7427 7.0966 5.98 5.98 0 0 0 .511 4.9107 6.051 6.051 0 0 0 6.5146 2.9001A5.9847 5.9847 0 0 0 13.2599 24a6.0557 6.0557 0 0 0 5.7718-4.2058 5.9894 5.9894 0 0 0 3.9977-2.9001 6.0557 6.0557 0 0 0-.7475-7.0729zm-9.022 12.6081a4.4755 4.4755 0 0 1-2.8764-1.0408l.1419-.0804 4.7783-2.7582a.7948.7948 0 0 0 .3927-.6813v-6.7369l2.02 1.1686a.071.071 0 0 1 .038.052v5.5826a4.504 4.504 0 0 1-4.4945 4.4944zm-9.6607-4.1254a4.4708 4.4708 0 0 1-.5346-3.0137l.142.0852 4.783 2.7582a.7712.7712 0 0 0 .7806 0l5.8428-3.3685v2.3324a.0804.0804 0 0 1-.0332.0615L9.74 19.9502a4.4992 4.4992 0 0 1-6.1408-1.6464zM2.3408 7.8956a4.485 4.485 0 0 1 2.3655-1.9728V11.6a.7664.7664 0 0 0 .3879.6765l5.8144 3.3543-2.0201 1.1685a.0757.0757 0 0 1-.071 0l-4.8303-2.7865A4.504 4.504 0 0 1 2.3408 7.872zm16.5963 3.8558L13.1038 8.364 15.1192 7.2a.0757.0757 0 0 1 .071 0l4.8303 2.7913a4.4944 4.4944 0 0 1-.6765 8.1042v-5.6772a.79.79 0 0 0-.407-.667zm2.0107-3.0231l-.142-.0852-4.7735-2.7818a.7759.7759 0 0 0-.7854 0L9.409 9.2297V6.8974a.0662.0662 0 0 1 .0284-.0615l4.8303-2.7866a4.4992 4.4992 0 0 1 6.6802 4.66zM8.3065 12.863l-2.02-1.1638a.0804.0804 0 0 1-.038-.0567V6.0742a4.4992 4.4992 0 0 1 7.3757-3.4537l-.142.0805L8.704 5.459a.7948.7948 0 0 0-.3927.6813zm1.0976-2.3654l2.602-1.4998 2.6069 1.4998v2.9994l-2.5974 1.4997-2.6067-1.4997Z"/></svg></span><span class="ab"><svg width="31" height="31" viewBox="0 0 24 24" fill="#4353c8"><path d="M11.04 19.32Q12 21.51 12 24q0-2.490.93-4.680.96-2.190 2.580-3.810t3.810-2.550Q21.510 12 24 12q-2.490 0-4.680-.93a12.300 12.300 0 0 1-3.810-2.580 12.300 12.300 0 0 1-2.580-3.810Q12 2.490 12 0q0 2.490-.96 4.680-.93 2.190-2.550 3.810a12.300 12.300 0 0 1-3.810 2.580Q2.490 12 0 12q2.490 0 4.680.96 2.190.93 3.810 2.550t2.550 3.810"/></svg></span><span class="ab"><svg width="34" height="34" viewBox="0 0 24 24" fill="#4389f0" fill-rule="evenodd"><path d="M23.748 4.482c-.254-.124-.364.113-.512.234-.051.039-.094.090-.137.136-.372.397-.806.657-1.373.626-.829-.046-1.537.214-2.163.848-.133-.782-.575-1.248-1.247-1.548-.352-.156-.708-.311-.955-.650-.172-.241-.219-.510-.305-.774-.055-.160-.110-.323-.293-.350-.200-.031-.278.136-.356.276-.313.572-.434 1.202-.422 1.840.027 1.436.633 2.580 1.838 3.393.137.093.172.187.129.323-.082.280-.180.552-.266.833-.055.179-.137.217-.329.140a5.526 5.526 0 01-1.736-1.180c-.857-.828-1.631-1.742-2.597-2.458a11.365 11.365 0 00-.689-.471c-.985-.957.130-1.743.388-1.836.270-.098.093-.432-.779-.428-.872.004-1.670.295-2.687.684a3.055 3.055 0 01-.465.137 9.597 9.597 0 00-2.883-.102c-1.885.210-3.390 1.102-4.497 2.623C.082 8.606-.231 10.684.152 12.850c.403 2.284 1.569 4.175 3.360 5.653 1.858 1.533 3.997 2.284 6.438 2.140 1.482-.085 3.133-.284 4.994-1.860.470.234.962.327 1.780.397.630.059 1.236-.030 1.705-.128.735-.156.684-.837.419-.961-2.155-1.004-1.682-.595-2.113-.926 1.096-1.296 2.746-2.642 3.392-7.003.050-.347.007-.565 0-.845-.004-.170.035-.237.230-.256a4.173 4.173 0 001.545-.475c1.396-.763 1.960-2.015 2.093-3.517.020-.230-.004-.467-.247-.588zM11.581 18c-2.089-1.642-3.102-2.183-3.520-2.160-.392.024-.321.471-.235.763.090.288.207.486.371.739.114.167.192.416-.113.603-.673.416-1.842-.140-1.897-.167-1.361-.802-2.500-1.860-3.301-3.307-.774-1.393-1.224-2.887-1.298-4.482-.020-.386.093-.522.477-.592a4.696 4.696 0 011.529-.039c2.132.312 3.946 1.265 5.468 2.774.868.860 1.525 1.887 2.202 2.891.720 1.066 1.494 2.082 2.480 2.914.348.292.625.514.891.677-.802.090-2.140.110-3.054-.614zm1-6.440a.306.306 0 01.415-.287.302.302 0 01.200.288.306.306 0 01-.310.307.303.303 0 01-.304-.308zm3.110 1.596c-.200.081-.399.151-.590.160a1.245 1.245 0 01-.798-.254c-.274-.230-.470-.358-.552-.758a1.730 1.730 0 01.016-.588c.070-.327-.008-.537-.239-.727-.187-.156-.426-.199-.688-.199a.559.559 0 01-.254-.078c-.110-.054-.200-.190-.114-.358.028-.054.160-.186.192-.210.356-.202.767-.136 1.146.016.352.144.618.408 1.001.782.391.451.462.576.685.914.176.265.336.537.445.848.067.195-.019.354-.250.452z"/></svg></span><span class="ab"><svg width="52" height="52" viewBox="0 0 52 52" fill="none"><path d="M32.400 16.400A11.600 11.600 0 0 0 15.600 30.600" stroke="#b25cc0" stroke-width="3.600"/><path d="M37.100 21.800A11.600 11.600 0 0 1 20.300 36.200" stroke="#b25cc0" stroke-width="3.600"/><path d="M43.400 8.600 37 17.400 39 22.400 35.800 19.800 21.600 31 20.800 30z" fill="#b25cc0"/><path d="M6.600 43.800 14 31.800 18.600 35.800z" fill="#b25cc0"/><path d="M32.600 14.400l2.400.8-2.900 3.300zM20.400 38.200l-2.400-.8 3.100-3z" fill="#b25cc0"/></svg></span></div></div></div>
<div class="tr" style="top:533.00px;height:138.00px"><span class="cb"></span><span class="c name" style="left:175px">Anime Keychain</span><span class="c" style="left:643px">Anime Keychain</span><span class="c" style="left:913px">Unique Anime Keychain<br>Collection - Shop Now …</span><span class="c" style="left:1273px">Explore our exclusive Anime<br>Keychain selection. Add a fun…</span><span class="c" style="left:1723px">/anime-keychain</span><div class="fx"><div class="ops"><svg class="edit" width="32" height="32" viewBox="64 64 896 896" fill="#4a8bea"><path d="M257.7 752c2 0 4-.2 6-.5L431.900 722c2-.4 3.900-1.300 5.300-2.800l423.900-423.900a9.960 9.960 0 000-14.100L694.900 114.900c-1.900-1.900-4.400-2.900-7.100-2.900s-5.200 1-7.100 2.900L256.800 538.800c-1.500 1.500-2.400 3.300-2.800 5.300l-29.500 168.200a33.500 33.500 0 009.400 29.800c6.600 6.400 14.900 9.900 23.800 9.900zm67.400-174.400L687.800 215l73.300 73.300-362.700 362.600-88.900 15.700 15.600-89zM880 836H144c-17.700 0-32 14.300-32 32v36c0 4.400 3.600 8 8 8h784c4.400 0 8-3.600 8-8v-36c0-17.700-14.300-32-32-32z"/></svg><span class="ab"><svg width="31" height="31" viewBox="0 0 24 24" fill="#4c9e7b"><path d="M22.2819 9.8211a5.9847 5.9847 0 0 0-.5157-4.9108 6.0462 6.0462 0 0 0-6.5098-2.9A6.0651 6.0651 0 0 0 4.9807 4.1818a5.9847 5.9847 0 0 0-3.9977 2.9 6.0462 6.0462 0 0 0 .7427 7.0966 5.98 5.98 0 0 0 .511 4.9107 6.051 6.051 0 0 0 6.5146 2.9001A5.9847 5.9847 0 0 0 13.2599 24a6.0557 6.0557 0 0 0 5.7718-4.2058 5.9894 5.9894 0 0 0 3.9977-2.9001 6.0557 6.0557 0 0 0-.7475-7.0729zm-9.022 12.6081a4.4755 4.4755 0 0 1-2.8764-1.0408l.1419-.0804 4.7783-2.7582a.7948.7948 0 0 0 .3927-.6813v-6.7369l2.02 1.1686a.071.071 0 0 1 .038.052v5.5826a4.504 4.504 0 0 1-4.4945 4.4944zm-9.6607-4.1254a4.4708 4.4708 0 0 1-.5346-3.0137l.142.0852 4.783 2.7582a.7712.7712 0 0 0 .7806 0l5.8428-3.3685v2.3324a.0804.0804 0 0 1-.0332.0615L9.74 19.9502a4.4992 4.4992 0 0 1-6.1408-1.6464zM2.3408 7.8956a4.485 4.485 0 0 1 2.3655-1.9728V11.6a.7664.7664 0 0 0 .3879.6765l5.8144 3.3543-2.0201 1.1685a.0757.0757 0 0 1-.071 0l-4.8303-2.7865A4.504 4.504 0 0 1 2.3408 7.872zm16.5963 3.8558L13.1038 8.364 15.1192 7.2a.0757.0757 0 0 1 .071 0l4.8303 2.7913a4.4944 4.4944 0 0 1-.6765 8.1042v-5.6772a.79.79 0 0 0-.407-.667zm2.0107-3.0231l-.142-.0852-4.7735-2.7818a.7759.7759 0 0 0-.7854 0L9.409 9.2297V6.8974a.0662.0662 0 0 1 .0284-.0615l4.8303-2.7866a4.4992 4.4992 0 0 1 6.6802 4.66zM8.3065 12.863l-2.02-1.1638a.0804.0804 0 0 1-.038-.0567V6.0742a4.4992 4.4992 0 0 1 7.3757-3.4537l-.142.0805L8.704 5.459a.7948.7948 0 0 0-.3927.6813zm1.0976-2.3654l2.602-1.4998 2.6069 1.4998v2.9994l-2.5974 1.4997-2.6067-1.4997Z"/></svg></span><span class="ab"><svg width="31" height="31" viewBox="0 0 24 24" fill="#4353c8"><path d="M11.04 19.32Q12 21.51 12 24q0-2.490.93-4.680.96-2.190 2.580-3.810t3.810-2.550Q21.510 12 24 12q-2.490 0-4.680-.93a12.300 12.300 0 0 1-3.810-2.580 12.300 12.300 0 0 1-2.580-3.810Q12 2.490 12 0q0 2.490-.96 4.680-.93 2.190-2.550 3.810a12.300 12.300 0 0 1-3.810 2.580Q2.490 12 0 12q2.490 0 4.680.96 2.190.93 3.810 2.550t2.550 3.810"/></svg></span><span class="ab"><svg width="34" height="34" viewBox="0 0 24 24" fill="#4389f0" fill-rule="evenodd"><path d="M23.748 4.482c-.254-.124-.364.113-.512.234-.051.039-.094.090-.137.136-.372.397-.806.657-1.373.626-.829-.046-1.537.214-2.163.848-.133-.782-.575-1.248-1.247-1.548-.352-.156-.708-.311-.955-.650-.172-.241-.219-.510-.305-.774-.055-.160-.110-.323-.293-.350-.200-.031-.278.136-.356.276-.313.572-.434 1.202-.422 1.840.027 1.436.633 2.580 1.838 3.393.137.093.172.187.129.323-.082.280-.180.552-.266.833-.055.179-.137.217-.329.140a5.526 5.526 0 01-1.736-1.180c-.857-.828-1.631-1.742-2.597-2.458a11.365 11.365 0 00-.689-.471c-.985-.957.130-1.743.388-1.836.270-.098.093-.432-.779-.428-.872.004-1.670.295-2.687.684a3.055 3.055 0 01-.465.137 9.597 9.597 0 00-2.883-.102c-1.885.210-3.390 1.102-4.497 2.623C.082 8.606-.231 10.684.152 12.850c.403 2.284 1.569 4.175 3.360 5.653 1.858 1.533 3.997 2.284 6.438 2.140 1.482-.085 3.133-.284 4.994-1.860.470.234.962.327 1.780.397.630.059 1.236-.030 1.705-.128.735-.156.684-.837.419-.961-2.155-1.004-1.682-.595-2.113-.926 1.096-1.296 2.746-2.642 3.392-7.003.050-.347.007-.565 0-.845-.004-.170.035-.237.230-.256a4.173 4.173 0 001.545-.475c1.396-.763 1.960-2.015 2.093-3.517.020-.230-.004-.467-.247-.588zM11.581 18c-2.089-1.642-3.102-2.183-3.520-2.160-.392.024-.321.471-.235.763.090.288.207.486.371.739.114.167.192.416-.113.603-.673.416-1.842-.140-1.897-.167-1.361-.802-2.500-1.860-3.301-3.307-.774-1.393-1.224-2.887-1.298-4.482-.020-.386.093-.522.477-.592a4.696 4.696 0 011.529-.039c2.132.312 3.946 1.265 5.468 2.774.868.860 1.525 1.887 2.202 2.891.720 1.066 1.494 2.082 2.480 2.914.348.292.625.514.891.677-.802.090-2.140.110-3.054-.614zm1-6.440a.306.306 0 01.415-.287.302.302 0 01.200.288.306.306 0 01-.310.307.303.303 0 01-.304-.308zm3.110 1.596c-.200.081-.399.151-.590.160a1.245 1.245 0 01-.798-.254c-.274-.230-.470-.358-.552-.758a1.730 1.730 0 01.016-.588c.070-.327-.008-.537-.239-.727-.187-.156-.426-.199-.688-.199a.559.559 0 01-.254-.078c-.110-.054-.200-.190-.114-.358.028-.054.160-.186.192-.210.356-.202.767-.136 1.146.016.352.144.618.408 1.001.782.391.451.462.576.685.914.176.265.336.537.445.848.067.195-.019.354-.250.452z"/></svg></span><span class="ab"><svg width="52" height="52" viewBox="0 0 52 52" fill="none"><path d="M32.400 16.400A11.600 11.600 0 0 0 15.600 30.600" stroke="#b25cc0" stroke-width="3.600"/><path d="M37.100 21.800A11.600 11.600 0 0 1 20.300 36.200" stroke="#b25cc0" stroke-width="3.600"/><path d="M43.400 8.600 37 17.400 39 22.400 35.800 19.800 21.600 31 20.800 30z" fill="#b25cc0"/><path d="M6.600 43.800 14 31.800 18.600 35.800z" fill="#b25cc0"/><path d="M32.600 14.400l2.400.8-2.900 3.300zM20.400 38.200l-2.400-.8 3.100-3z" fill="#b25cc0"/></svg></span></div></div></div>
<div class="tr" style="top:671.00px;height:137.00px"><span class="cb"></span><span class="c name" style="left:175px">Car toys</span><span class="c" style="left:643px">cartoon toy,car<br>toy</span><span class="c" style="left:913px">Mingxing - car toy Global<br>Support</span><span class="c" style="left:1273px">Professional cartoon toy<br>Manufacture, Mingxing…</span><span class="c" style="left:1723px">/car-toys</span><div class="fx"><div class="ops"><svg class="edit" width="32" height="32" viewBox="64 64 896 896" fill="#4a8bea"><path d="M257.7 752c2 0 4-.2 6-.5L431.900 722c2-.4 3.900-1.300 5.300-2.800l423.900-423.900a9.960 9.960 0 000-14.100L694.900 114.900c-1.900-1.900-4.400-2.900-7.100-2.900s-5.200 1-7.100 2.900L256.800 538.800c-1.500 1.500-2.400 3.300-2.800 5.300l-29.500 168.200a33.500 33.500 0 009.400 29.800c6.600 6.400 14.900 9.900 23.800 9.900zm67.400-174.400L687.800 215l73.300 73.300-362.700 362.600-88.900 15.700 15.600-89zM880 836H144c-17.700 0-32 14.300-32 32v36c0 4.400 3.600 8 8 8h784c4.400 0 8-3.600 8-8v-36c0-17.700-14.300-32-32-32z"/></svg><span class="ab"><svg width="31" height="31" viewBox="0 0 24 24" fill="#4c9e7b"><path d="M22.2819 9.8211a5.9847 5.9847 0 0 0-.5157-4.9108 6.0462 6.0462 0 0 0-6.5098-2.9A6.0651 6.0651 0 0 0 4.9807 4.1818a5.9847 5.9847 0 0 0-3.9977 2.9 6.0462 6.0462 0 0 0 .7427 7.0966 5.98 5.98 0 0 0 .511 4.9107 6.051 6.051 0 0 0 6.5146 2.9001A5.9847 5.9847 0 0 0 13.2599 24a6.0557 6.0557 0 0 0 5.7718-4.2058 5.9894 5.9894 0 0 0 3.9977-2.9001 6.0557 6.0557 0 0 0-.7475-7.0729zm-9.022 12.6081a4.4755 4.4755 0 0 1-2.8764-1.0408l.1419-.0804 4.7783-2.7582a.7948.7948 0 0 0 .3927-.6813v-6.7369l2.02 1.1686a.071.071 0 0 1 .038.052v5.5826a4.504 4.504 0 0 1-4.4945 4.4944zm-9.6607-4.1254a4.4708 4.4708 0 0 1-.5346-3.0137l.142.0852 4.783 2.7582a.7712.7712 0 0 0 .7806 0l5.8428-3.3685v2.3324a.0804.0804 0 0 1-.0332.0615L9.74 19.9502a4.4992 4.4992 0 0 1-6.1408-1.6464zM2.3408 7.8956a4.485 4.485 0 0 1 2.3655-1.9728V11.6a.7664.7664 0 0 0 .3879.6765l5.8144 3.3543-2.0201 1.1685a.0757.0757 0 0 1-.071 0l-4.8303-2.7865A4.504 4.504 0 0 1 2.3408 7.872zm16.5963 3.8558L13.1038 8.364 15.1192 7.2a.0757.0757 0 0 1 .071 0l4.8303 2.7913a4.4944 4.4944 0 0 1-.6765 8.1042v-5.6772a.79.79 0 0 0-.407-.667zm2.0107-3.0231l-.142-.0852-4.7735-2.7818a.7759.7759 0 0 0-.7854 0L9.409 9.2297V6.8974a.0662.0662 0 0 1 .0284-.0615l4.8303-2.7866a4.4992 4.4992 0 0 1 6.6802 4.66zM8.3065 12.863l-2.02-1.1638a.0804.0804 0 0 1-.038-.0567V6.0742a4.4992 4.4992 0 0 1 7.3757-3.4537l-.142.0805L8.704 5.459a.7948.7948 0 0 0-.3927.6813zm1.0976-2.3654l2.602-1.4998 2.6069 1.4998v2.9994l-2.5974 1.4997-2.6067-1.4997Z"/></svg></span><span class="ab"><svg width="31" height="31" viewBox="0 0 24 24" fill="#4353c8"><path d="M11.04 19.32Q12 21.51 12 24q0-2.490.93-4.680.96-2.190 2.580-3.810t3.810-2.550Q21.510 12 24 12q-2.490 0-4.680-.93a12.300 12.300 0 0 1-3.810-2.580 12.300 12.300 0 0 1-2.580-3.810Q12 2.490 12 0q0 2.490-.96 4.680-.93 2.190-2.550 3.810a12.300 12.300 0 0 1-3.810 2.580Q2.490 12 0 12q2.490 0 4.680.96 2.190.93 3.810 2.550t2.550 3.810"/></svg></span><span class="ab"><svg width="34" height="34" viewBox="0 0 24 24" fill="#4389f0" fill-rule="evenodd"><path d="M23.748 4.482c-.254-.124-.364.113-.512.234-.051.039-.094.090-.137.136-.372.397-.806.657-1.373.626-.829-.046-1.537.214-2.163.848-.133-.782-.575-1.248-1.247-1.548-.352-.156-.708-.311-.955-.650-.172-.241-.219-.510-.305-.774-.055-.160-.110-.323-.293-.350-.200-.031-.278.136-.356.276-.313.572-.434 1.202-.422 1.840.027 1.436.633 2.580 1.838 3.393.137.093.172.187.129.323-.082.280-.180.552-.266.833-.055.179-.137.217-.329.140a5.526 5.526 0 01-1.736-1.180c-.857-.828-1.631-1.742-2.597-2.458a11.365 11.365 0 00-.689-.471c-.985-.957.130-1.743.388-1.836.270-.098.093-.432-.779-.428-.872.004-1.670.295-2.687.684a3.055 3.055 0 01-.465.137 9.597 9.597 0 00-2.883-.102c-1.885.210-3.390 1.102-4.497 2.623C.082 8.606-.231 10.684.152 12.850c.403 2.284 1.569 4.175 3.360 5.653 1.858 1.533 3.997 2.284 6.438 2.140 1.482-.085 3.133-.284 4.994-1.860.470.234.962.327 1.780.397.630.059 1.236-.030 1.705-.128.735-.156.684-.837.419-.961-2.155-1.004-1.682-.595-2.113-.926 1.096-1.296 2.746-2.642 3.392-7.003.050-.347.007-.565 0-.845-.004-.170.035-.237.230-.256a4.173 4.173 0 001.545-.475c1.396-.763 1.960-2.015 2.093-3.517.020-.230-.004-.467-.247-.588zM11.581 18c-2.089-1.642-3.102-2.183-3.520-2.160-.392.024-.321.471-.235.763.090.288.207.486.371.739.114.167.192.416-.113.603-.673.416-1.842-.140-1.897-.167-1.361-.802-2.500-1.860-3.301-3.307-.774-1.393-1.224-2.887-1.298-4.482-.020-.386.093-.522.477-.592a4.696 4.696 0 011.529-.039c2.132.312 3.946 1.265 5.468 2.774.868.860 1.525 1.887 2.202 2.891.720 1.066 1.494 2.082 2.480 2.914.348.292.625.514.891.677-.802.090-2.140.110-3.054-.614zm1-6.440a.306.306 0 01.415-.287.302.302 0 01.200.288.306.306 0 01-.310.307.303.303 0 01-.304-.308zm3.110 1.596c-.200.081-.399.151-.590.160a1.245 1.245 0 01-.798-.254c-.274-.230-.470-.358-.552-.758a1.730 1.730 0 01.016-.588c.070-.327-.008-.537-.239-.727-.187-.156-.426-.199-.688-.199a.559.559 0 01-.254-.078c-.110-.054-.200-.190-.114-.358.028-.054.160-.186.192-.210.356-.202.767-.136 1.146.016.352.144.618.408 1.001.782.391.451.462.576.685.914.176.265.336.537.445.848.067.195-.019.354-.250.452z"/></svg></span><span class="ab"><svg width="52" height="52" viewBox="0 0 52 52" fill="none"><path d="M32.400 16.400A11.600 11.600 0 0 0 15.600 30.600" stroke="#b25cc0" stroke-width="3.600"/><path d="M37.100 21.800A11.600 11.600 0 0 1 20.300 36.200" stroke="#b25cc0" stroke-width="3.600"/><path d="M43.400 8.600 37 17.400 39 22.400 35.800 19.800 21.600 31 20.800 30z" fill="#b25cc0"/><path d="M6.600 43.800 14 31.800 18.600 35.800z" fill="#b25cc0"/><path d="M32.600 14.400l2.400.8-2.900 3.300zM20.400 38.200l-2.400-.8 3.100-3z" fill="#b25cc0"/></svg></span></div></div></div>
<div class="tr" style="top:808.00px;height:138.00px"><span class="cb"></span><span class="c name" style="left:175px">Parent child toys</span><span class="c" style="left:643px">Parent child toys</span><span class="c" style="left:913px">Explore Quality Parent<br>Child Toys | Fun &amp;…</span><span class="c" style="left:1273px">Discover top Parent Child Toys<br>for fun &amp; learning. Elevate…</span><span class="c" style="left:1723px">/product-parent-child-<br>toys</span><div class="fx"><div class="ops"><svg class="edit" width="32" height="32" viewBox="64 64 896 896" fill="#4a8bea"><path d="M257.7 752c2 0 4-.2 6-.5L431.900 722c2-.4 3.900-1.300 5.300-2.800l423.900-423.900a9.960 9.960 0 000-14.100L694.900 114.900c-1.900-1.900-4.400-2.900-7.100-2.900s-5.200 1-7.100 2.900L256.800 538.800c-1.500 1.500-2.400 3.300-2.800 5.300l-29.500 168.200a33.500 33.500 0 009.400 29.800c6.600 6.400 14.900 9.900 23.800 9.900zm67.400-174.400L687.800 215l73.300 73.300-362.700 362.600-88.900 15.700 15.600-89zM880 836H144c-17.700 0-32 14.300-32 32v36c0 4.400 3.600 8 8 8h784c4.400 0 8-3.600 8-8v-36c0-17.700-14.300-32-32-32z"/></svg><span class="ab"><svg width="31" height="31" viewBox="0 0 24 24" fill="#4c9e7b"><path d="M22.2819 9.8211a5.9847 5.9847 0 0 0-.5157-4.9108 6.0462 6.0462 0 0 0-6.5098-2.9A6.0651 6.0651 0 0 0 4.9807 4.1818a5.9847 5.9847 0 0 0-3.9977 2.9 6.0462 6.0462 0 0 0 .7427 7.0966 5.98 5.98 0 0 0 .511 4.9107 6.051 6.051 0 0 0 6.5146 2.9001A5.9847 5.9847 0 0 0 13.2599 24a6.0557 6.0557 0 0 0 5.7718-4.2058 5.9894 5.9894 0 0 0 3.9977-2.9001 6.0557 6.0557 0 0 0-.7475-7.0729zm-9.022 12.6081a4.4755 4.4755 0 0 1-2.8764-1.0408l.1419-.0804 4.7783-2.7582a.7948.7948 0 0 0 .3927-.6813v-6.7369l2.02 1.1686a.071.071 0 0 1 .038.052v5.5826a4.504 4.504 0 0 1-4.4945 4.4944zm-9.6607-4.1254a4.4708 4.4708 0 0 1-.5346-3.0137l.142.0852 4.783 2.7582a.7712.7712 0 0 0 .7806 0l5.8428-3.3685v2.3324a.0804.0804 0 0 1-.0332.0615L9.74 19.9502a4.4992 4.4992 0 0 1-6.1408-1.6464zM2.3408 7.8956a4.485 4.485 0 0 1 2.3655-1.9728V11.6a.7664.7664 0 0 0 .3879.6765l5.8144 3.3543-2.0201 1.1685a.0757.0757 0 0 1-.071 0l-4.8303-2.7865A4.504 4.504 0 0 1 2.3408 7.872zm16.5963 3.8558L13.1038 8.364 15.1192 7.2a.0757.0757 0 0 1 .071 0l4.8303 2.7913a4.4944 4.4944 0 0 1-.6765 8.1042v-5.6772a.79.79 0 0 0-.407-.667zm2.0107-3.0231l-.142-.0852-4.7735-2.7818a.7759.7759 0 0 0-.7854 0L9.409 9.2297V6.8974a.0662.0662 0 0 1 .0284-.0615l4.8303-2.7866a4.4992 4.4992 0 0 1 6.6802 4.66zM8.3065 12.863l-2.02-1.1638a.0804.0804 0 0 1-.038-.0567V6.0742a4.4992 4.4992 0 0 1 7.3757-3.4537l-.142.0805L8.704 5.459a.7948.7948 0 0 0-.3927.6813zm1.0976-2.3654l2.602-1.4998 2.6069 1.4998v2.9994l-2.5974 1.4997-2.6067-1.4997Z"/></svg></span><span class="ab"><svg width="31" height="31" viewBox="0 0 24 24" fill="#4353c8"><path d="M11.04 19.32Q12 21.51 12 24q0-2.490.93-4.680.96-2.190 2.580-3.810t3.810-2.550Q21.510 12 24 12q-2.490 0-4.680-.93a12.300 12.300 0 0 1-3.810-2.580 12.300 12.300 0 0 1-2.580-3.810Q12 2.490 12 0q0 2.490-.96 4.680-.93 2.190-2.550 3.810a12.300 12.300 0 0 1-3.810 2.580Q2.490 12 0 12q2.490 0 4.680.96 2.190.93 3.810 2.550t2.550 3.810"/></svg></span><span class="ab"><svg width="34" height="34" viewBox="0 0 24 24" fill="#4389f0" fill-rule="evenodd"><path d="M23.748 4.482c-.254-.124-.364.113-.512.234-.051.039-.094.090-.137.136-.372.397-.806.657-1.373.626-.829-.046-1.537.214-2.163.848-.133-.782-.575-1.248-1.247-1.548-.352-.156-.708-.311-.955-.650-.172-.241-.219-.510-.305-.774-.055-.160-.110-.323-.293-.350-.200-.031-.278.136-.356.276-.313.572-.434 1.202-.422 1.840.027 1.436.633 2.580 1.838 3.393.137.093.172.187.129.323-.082.280-.180.552-.266.833-.055.179-.137.217-.329.140a5.526 5.526 0 01-1.736-1.180c-.857-.828-1.631-1.742-2.597-2.458a11.365 11.365 0 00-.689-.471c-.985-.957.130-1.743.388-1.836.270-.098.093-.432-.779-.428-.872.004-1.670.295-2.687.684a3.055 3.055 0 01-.465.137 9.597 9.597 0 00-2.883-.102c-1.885.210-3.390 1.102-4.497 2.623C.082 8.606-.231 10.684.152 12.850c.403 2.284 1.569 4.175 3.360 5.653 1.858 1.533 3.997 2.284 6.438 2.140 1.482-.085 3.133-.284 4.994-1.860.470.234.962.327 1.780.397.630.059 1.236-.030 1.705-.128.735-.156.684-.837.419-.961-2.155-1.004-1.682-.595-2.113-.926 1.096-1.296 2.746-2.642 3.392-7.003.050-.347.007-.565 0-.845-.004-.170.035-.237.230-.256a4.173 4.173 0 001.545-.475c1.396-.763 1.960-2.015 2.093-3.517.020-.230-.004-.467-.247-.588zM11.581 18c-2.089-1.642-3.102-2.183-3.520-2.160-.392.024-.321.471-.235.763.090.288.207.486.371.739.114.167.192.416-.113.603-.673.416-1.842-.140-1.897-.167-1.361-.802-2.500-1.860-3.301-3.307-.774-1.393-1.224-2.887-1.298-4.482-.020-.386.093-.522.477-.592a4.696 4.696 0 011.529-.039c2.132.312 3.946 1.265 5.468 2.774.868.860 1.525 1.887 2.202 2.891.720 1.066 1.494 2.082 2.480 2.914.348.292.625.514.891.677-.802.090-2.140.110-3.054-.614zm1-6.440a.306.306 0 01.415-.287.302.302 0 01.200.288.306.306 0 01-.310.307.303.303 0 01-.304-.308zm3.110 1.596c-.200.081-.399.151-.590.160a1.245 1.245 0 01-.798-.254c-.274-.230-.470-.358-.552-.758a1.730 1.730 0 01.016-.588c.070-.327-.008-.537-.239-.727-.187-.156-.426-.199-.688-.199a.559.559 0 01-.254-.078c-.110-.054-.200-.190-.114-.358.028-.054.160-.186.192-.210.356-.202.767-.136 1.146.016.352.144.618.408 1.001.782.391.451.462.576.685.914.176.265.336.537.445.848.067.195-.019.354-.250.452z"/></svg></span><span class="ab"><svg width="52" height="52" viewBox="0 0 52 52" fill="none"><path d="M32.400 16.400A11.600 11.600 0 0 0 15.600 30.600" stroke="#b25cc0" stroke-width="3.600"/><path d="M37.100 21.800A11.600 11.600 0 0 1 20.300 36.200" stroke="#b25cc0" stroke-width="3.600"/><path d="M43.400 8.600 37 17.400 39 22.400 35.800 19.800 21.600 31 20.800 30z" fill="#b25cc0"/><path d="M6.600 43.800 14 31.800 18.600 35.800z" fill="#b25cc0"/><path d="M32.600 14.400l2.400.8-2.900 3.300zM20.400 38.200l-2.400-.8 3.100-3z" fill="#b25cc0"/></svg></span></div></div></div>
<div class="tr" style="top:946.00px;height:111.00px"><span class="cb"></span><span class="exp plus"><i></i><b></b></span><span class="c name" style="left:175px">Blind Box</span><span class="c" style="left:643px"></span><span class="c" style="left:913px">Blind Box</span><span class="c" style="left:1273px"></span><span class="c" style="left:1723px">/blind-box</span><div class="fx"><div class="ops"><svg class="edit" width="32" height="32" viewBox="64 64 896 896" fill="#4a8bea"><path d="M257.7 752c2 0 4-.2 6-.5L431.900 722c2-.4 3.900-1.300 5.300-2.800l423.900-423.900a9.960 9.960 0 000-14.100L694.900 114.900c-1.900-1.900-4.400-2.900-7.100-2.900s-5.200 1-7.100 2.900L256.800 538.800c-1.500 1.500-2.400 3.300-2.800 5.300l-29.500 168.200a33.500 33.500 0 009.400 29.800c6.600 6.400 14.900 9.900 23.800 9.900zm67.400-174.400L687.800 215l73.300 73.300-362.700 362.600-88.900 15.700 15.600-89zM880 836H144c-17.700 0-32 14.300-32 32v36c0 4.400 3.600 8 8 8h784c4.400 0 8-3.600 8-8v-36c0-17.700-14.300-32-32-32z"/></svg><span class="ab"><svg width="31" height="31" viewBox="0 0 24 24" fill="#4c9e7b"><path d="M22.2819 9.8211a5.9847 5.9847 0 0 0-.5157-4.9108 6.0462 6.0462 0 0 0-6.5098-2.9A6.0651 6.0651 0 0 0 4.9807 4.1818a5.9847 5.9847 0 0 0-3.9977 2.9 6.0462 6.0462 0 0 0 .7427 7.0966 5.98 5.98 0 0 0 .511 4.9107 6.051 6.051 0 0 0 6.5146 2.9001A5.9847 5.9847 0 0 0 13.2599 24a6.0557 6.0557 0 0 0 5.7718-4.2058 5.9894 5.9894 0 0 0 3.9977-2.9001 6.0557 6.0557 0 0 0-.7475-7.0729zm-9.022 12.6081a4.4755 4.4755 0 0 1-2.8764-1.0408l.1419-.0804 4.7783-2.7582a.7948.7948 0 0 0 .3927-.6813v-6.7369l2.02 1.1686a.071.071 0 0 1 .038.052v5.5826a4.504 4.504 0 0 1-4.4945 4.4944zm-9.6607-4.1254a4.4708 4.4708 0 0 1-.5346-3.0137l.142.0852 4.783 2.7582a.7712.7712 0 0 0 .7806 0l5.8428-3.3685v2.3324a.0804.0804 0 0 1-.0332.0615L9.74 19.9502a4.4992 4.4992 0 0 1-6.1408-1.6464zM2.3408 7.8956a4.485 4.485 0 0 1 2.3655-1.9728V11.6a.7664.7664 0 0 0 .3879.6765l5.8144 3.3543-2.0201 1.1685a.0757.0757 0 0 1-.071 0l-4.8303-2.7865A4.504 4.504 0 0 1 2.3408 7.872zm16.5963 3.8558L13.1038 8.364 15.1192 7.2a.0757.0757 0 0 1 .071 0l4.8303 2.7913a4.4944 4.4944 0 0 1-.6765 8.1042v-5.6772a.79.79 0 0 0-.407-.667zm2.0107-3.0231l-.142-.0852-4.7735-2.7818a.7759.7759 0 0 0-.7854 0L9.409 9.2297V6.8974a.0662.0662 0 0 1 .0284-.0615l4.8303-2.7866a4.4992 4.4992 0 0 1 6.6802 4.66zM8.3065 12.863l-2.02-1.1638a.0804.0804 0 0 1-.038-.0567V6.0742a4.4992 4.4992 0 0 1 7.3757-3.4537l-.142.0805L8.704 5.459a.7948.7948 0 0 0-.3927.6813zm1.0976-2.3654l2.602-1.4998 2.6069 1.4998v2.9994l-2.5974 1.4997-2.6067-1.4997Z"/></svg></span><span class="ab"><svg width="31" height="31" viewBox="0 0 24 24" fill="#4353c8"><path d="M11.04 19.32Q12 21.51 12 24q0-2.490.93-4.680.96-2.190 2.580-3.810t3.810-2.550Q21.510 12 24 12q-2.490 0-4.680-.93a12.300 12.300 0 0 1-3.810-2.580 12.300 12.300 0 0 1-2.580-3.810Q12 2.490 12 0q0 2.490-.96 4.680-.93 2.190-2.550 3.810a12.300 12.300 0 0 1-3.810 2.580Q2.490 12 0 12q2.490 0 4.680.96 2.190.93 3.810 2.550t2.550 3.810"/></svg></span><span class="ab"><svg width="34" height="34" viewBox="0 0 24 24" fill="#4389f0" fill-rule="evenodd"><path d="M23.748 4.482c-.254-.124-.364.113-.512.234-.051.039-.094.090-.137.136-.372.397-.806.657-1.373.626-.829-.046-1.537.214-2.163.848-.133-.782-.575-1.248-1.247-1.548-.352-.156-.708-.311-.955-.650-.172-.241-.219-.510-.305-.774-.055-.160-.110-.323-.293-.350-.200-.031-.278.136-.356.276-.313.572-.434 1.202-.422 1.840.027 1.436.633 2.580 1.838 3.393.137.093.172.187.129.323-.082.280-.180.552-.266.833-.055.179-.137.217-.329.140a5.526 5.526 0 01-1.736-1.180c-.857-.828-1.631-1.742-2.597-2.458a11.365 11.365 0 00-.689-.471c-.985-.957.130-1.743.388-1.836.270-.098.093-.432-.779-.428-.872.004-1.670.295-2.687.684a3.055 3.055 0 01-.465.137 9.597 9.597 0 00-2.883-.102c-1.885.210-3.390 1.102-4.497 2.623C.082 8.606-.231 10.684.152 12.850c.403 2.284 1.569 4.175 3.360 5.653 1.858 1.533 3.997 2.284 6.438 2.140 1.482-.085 3.133-.284 4.994-1.860.470.234.962.327 1.780.397.630.059 1.236-.030 1.705-.128.735-.156.684-.837.419-.961-2.155-1.004-1.682-.595-2.113-.926 1.096-1.296 2.746-2.642 3.392-7.003.050-.347.007-.565 0-.845-.004-.170.035-.237.230-.256a4.173 4.173 0 001.545-.475c1.396-.763 1.960-2.015 2.093-3.517.020-.230-.004-.467-.247-.588zM11.581 18c-2.089-1.642-3.102-2.183-3.520-2.160-.392.024-.321.471-.235.763.090.288.207.486.371.739.114.167.192.416-.113.603-.673.416-1.842-.140-1.897-.167-1.361-.802-2.500-1.860-3.301-3.307-.774-1.393-1.224-2.887-1.298-4.482-.020-.386.093-.522.477-.592a4.696 4.696 0 011.529-.039c2.132.312 3.946 1.265 5.468 2.774.868.860 1.525 1.887 2.202 2.891.720 1.066 1.494 2.082 2.480 2.914.348.292.625.514.891.677-.802.090-2.140.110-3.054-.614zm1-6.440a.306.306 0 01.415-.287.302.302 0 01.200.288.306.306 0 01-.310.307.303.303 0 01-.304-.308zm3.110 1.596c-.200.081-.399.151-.590.160a1.245 1.245 0 01-.798-.254c-.274-.230-.470-.358-.552-.758a1.730 1.730 0 01.016-.588c.070-.327-.008-.537-.239-.727-.187-.156-.426-.199-.688-.199a.559.559 0 01-.254-.078c-.110-.054-.200-.190-.114-.358.028-.054.160-.186.192-.210.356-.202.767-.136 1.146.016.352.144.618.408 1.001.782.391.451.462.576.685.914.176.265.336.537.445.848.067.195-.019.354-.250.452z"/></svg></span><span class="ab"><svg width="52" height="52" viewBox="0 0 52 52" fill="none"><path d="M32.400 16.400A11.600 11.600 0 0 0 15.600 30.600" stroke="#b25cc0" stroke-width="3.600"/><path d="M37.100 21.800A11.600 11.600 0 0 1 20.300 36.200" stroke="#b25cc0" stroke-width="3.600"/><path d="M43.400 8.600 37 17.400 39 22.400 35.800 19.800 21.600 31 20.800 30z" fill="#b25cc0"/><path d="M6.600 43.800 14 31.800 18.600 35.800z" fill="#b25cc0"/><path d="M32.600 14.400l2.400.8-2.900 3.300zM20.400 38.200l-2.400-.8 3.100-3z" fill="#b25cc0"/></svg></span></div></div></div>
    <div id="gut"></div>
    <div id="hs"><i style="left:0;width:29.500px;background:#9b9b9b;border-radius:0 0 0 3px"></i><i style="left:29.500px;width:2087px;background:#cbcbcb"></i><i style="left:2279px;width:30px;background:#9b9b9b"></i></div>
  </div>
</div>
</body></html>
